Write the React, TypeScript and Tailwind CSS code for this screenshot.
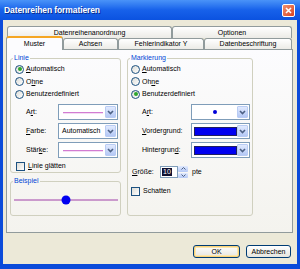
import React from "react";

const Chevron = () => (
  <svg width="7" height="5" viewBox="0 0 7 5">
    <path d="M1 1 L3.5 3.5 L6 1" fill="none" stroke="#4D6185" strokeWidth="1.6" />
  </svg>
);

const Radio = ({ checked, children, h = "h-[12px]" }: { checked?: boolean; children: React.ReactNode; h?: string }) => (
  <div className={`flex items-center ${h}`}>
    <span className="flex h-[9px] w-[9px] items-center justify-center rounded-full border border-[#1C5180] bg-gradient-to-br from-[#DCDCD6] to-white">
      {checked && <span className="h-[4px] w-[4px] rounded-full bg-[#2DA62D]" />}
    </span>
    <span className="ml-[2px]">{children}</span>
  </div>
);

const Check = ({ children }: { children: React.ReactNode }) => (
  <div className="flex h-[12px] items-center">
    <span className="h-[9px] w-[9px] border border-[#1C5180] bg-gradient-to-br from-[#DCDCD6] to-white" />
    <span className="ml-[3px]">{children}</span>
  </div>
);

const Combo = ({ children, w }: { children: React.ReactNode; w: string }) => (
  <div className={`flex h-[16px] ${w} border border-[#7F9DB9] bg-white p-px`}>
    <div className="flex flex-1 items-center justify-center overflow-hidden">{children}</div>
    <div className="flex w-[11px] items-center justify-center rounded-[1px] border border-[#B9CCF4] bg-gradient-to-b from-[#E1EAFE] to-[#B4C8F5]">
      <Chevron />
    </div>
  </div>
);

const LineSample = () => <div className="h-px w-[40px] bg-[#D27CD2] shadow-[0_0.5px_0_#E8B8E8]" />;

const Tab = ({ w, children, selected }: { w: string; children: React.ReactNode; selected?: boolean }) =>
  selected ? (
    <div
      className={`relative z-10 -mb-px flex h-[14px] ${w} items-center justify-center rounded-t-[3px] border-x border-[#919B9C] border-t-2 border-t-[#F5A623] bg-[#FCFCFE]`}
    >
      {children}
    </div>
  ) : (
    <div
      className={`flex h-full ${w} items-center justify-center rounded-t-[3px] border-x border-t border-[#919B9C] bg-gradient-to-b from-white to-[#ECEBE6]`}
    >
      {children}
    </div>
  );

const Btn = ({ w, children, def }: { w: string; children: React.ReactNode; def?: boolean }) => (
  <div
    className={`flex h-[13px] ${w} items-center justify-center rounded-[3px] border border-[#003C74] bg-gradient-to-b from-white to-[#E6E5DE] ${
      def ? "shadow-[inset_0_0_0_1px_#F9D37A,inset_0_0_0_2px_#FCE7B0]" : ""
    }`}
  >
    {children}
  </div>
);

const legend = "ml-[2px] px-px text-[7px] leading-[8px] text-[#0046D5]";

export default function App() {
  return (
    <div className="flex h-[269px] w-[300px] flex-col overflow-hidden bg-[#0B4BDA] font-['Liberation_Sans',Arial,sans-serif] text-[7px] leading-[8px] text-black">
      {/* Title bar */}
      <div className="flex h-[20px] items-center bg-gradient-to-b from-[#4A93F8] via-[#1761EA] to-[#0B52E0] pl-[4px] pr-[5px]">
        <span className="flex-1 text-[8.5px] font-bold tracking-[-0.1px] text-white [text-shadow:1px_1px_0_#0A2A8A]">
          Datenreihen formatieren
        </span>
        <div className="flex h-[13px] w-[13px] items-center justify-center rounded-[2px] border border-white bg-gradient-to-br from-[#F0906E] to-[#D8401E]">
          <svg width="7" height="7" viewBox="0 0 7 7">
            <path d="M1 1 L6 6 M6 1 L1 6" stroke="white" strokeWidth="1.6" />
          </svg>
        </div>
      </div>

      {/* Body */}
      <div className="mx-[3px] flex flex-1 flex-col bg-[#ECE9D8] pl-[3px] pt-[6px]">
        {/* Tabs row 1 */}
        <div className="ml-px flex h-[12px]">
          <Tab w="w-[165px]">Datenreihenanordnung</Tab>
          <Tab w="w-[120px]">Optionen</Tab>
        </div>
        {/* Tabs row 2 */}
        <div className="flex h-[11px] items-end">
          <Tab w="w-[57px]" selected>
            Muster
          </Tab>
          <Tab w="w-[55px]">Achsen</Tab>
          <Tab w="w-[86px]">Fehlerindikator Y</Tab>
          <Tab w="w-[88px]">Datenbeschriftung</Tab>
        </div>

        {/* Panel */}
        <div className="flex h-[184px] w-[287px] gap-[6px] border border-[#919B9C] bg-gradient-to-b from-[#FCFCFE] to-[#F4F3EE] pl-[3px] pt-[4px]">
          {/* Left column */}
          <div className="flex flex-col">
            <fieldset className="h-[119px] w-[111px] rounded-[3px] border border-[#D0D0BF]">
              <legend className={legend}>Linie</legend>
              <div className="pl-[4px] pt-px">
                <Radio checked>
                  <u>A</u>utomatisch
                </Radio>
                <Radio h="h-[13px]">
                  O<u>h</u>ne
                </Radio>
                <Radio>Benutzerdefiniert</Radio>
              </div>
              <div className="mt-[4px] flex flex-col gap-[3px] pl-[15px]">
                <div className="flex items-center">
                  <span className="w-[32px]">
                    A<u>r</u>t:
                  </span>
                  <Combo w="w-[60px]">
                    <LineSample />
                  </Combo>
                </div>
                <div className="flex items-center">
                  <span className="w-[32px]">
                    <u>F</u>arbe:
                  </span>
                  <Combo w="w-[60px]">
                    <span className="w-full pl-[2px]">Automatisch</span>
                  </Combo>
                </div>
                <div className="flex items-center">
                  <span className="w-[32px]">
                    Stär<u>k</u>e:
                  </span>
                  <Combo w="w-[60px]">
                    <LineSample />
                  </Combo>
                </div>
              </div>
              <div className="mt-[2px] pl-[5px]">
                <Check>
                  <u>L</u>inie glätten
                </Check>
              </div>
            </fieldset>
            <fieldset className="mt-[4px] h-[39px] w-[111px] rounded-[3px] border border-[#D0D0BF]">
              <legend className={legend}>Beispiel</legend>
              <div className="flex justify-center">
                <svg width="104" height="30" viewBox="0 0 104 30">
                  <line x1="0" y1="15" x2="104" y2="15" stroke="#A040A8" strokeWidth="1" />
                  <circle cx="52" cy="15" r="4.5" fill="#0000F0" />
                </svg>
              </div>
            </fieldset>
          </div>

          {/* Right column */}
          <fieldset className="h-[162px] w-[126px] rounded-[3px] border border-[#D0D0BF]">
            <legend className={legend}>Markierung</legend>
            <div className="pl-[3px] pt-px">
              <Radio>
                <u>A</u>utomatisch
              </Radio>
              <Radio h="h-[13px]">
                Oh<u>n</u>e
              </Radio>
              <Radio checked>Benutzerdefiniert</Radio>
            </div>
            <div className="mt-[4px] flex flex-col gap-[3px] pl-[14px]">
              <div className="flex items-center">
                <span className="w-[49px]">
                  A<u>r</u>t:
                </span>
                <Combo w="w-[59px]">
                  <span className="h-[4px] w-[4px] rounded-full bg-[#0000D8]" />
                </Combo>
              </div>
              <div className="flex items-center">
                <span className="w-[49px]">
                  <u>V</u>ordergrund:
                </span>
                <Combo w="w-[59px]">
                  <span className="h-[9px] w-[43px] border border-[#202060] bg-[#0000F0]" />
                </Combo>
              </div>
              <div className="flex items-center">
                <span className="w-[49px]">
                  Hintergrun<u>d</u>:
                </span>
                <Combo w="w-[59px]">
                  <span className="h-[9px] w-[43px] border border-[#202060] bg-[#0000F0]" />
                </Combo>
              </div>
            </div>
            <div className="mt-[8px] flex h-[12px] items-center pl-[4px]">
              <span className="w-[28px]">
                <u>G</u>röße:
              </span>
              <div className="flex h-[12px] w-[18px] items-center border border-[#7F9DB9] bg-white pl-px">
                <span className="bg-[#101030] px-px text-white">10</span>
              </div>
              <div className="flex h-[12px] w-[10px] flex-col gap-px">
                <div className="flex flex-1 items-center justify-center rounded-[1px] bg-gradient-to-b from-[#E1EAFE] to-[#B4C8F5]">
                  <svg width="5" height="3" viewBox="0 0 5 3">
                    <path d="M0.5 2.5 L2.5 0.5 L4.5 2.5" fill="none" stroke="#4D6185" strokeWidth="1" />
                  </svg>
                </div>
                <div className="flex flex-1 items-center justify-center rounded-[1px] bg-gradient-to-b from-[#E1EAFE] to-[#B4C8F5]">
                  <svg width="5" height="3" viewBox="0 0 5 3">
                    <path d="M0.5 0.5 L2.5 2.5 L4.5 0.5" fill="none" stroke="#4D6185" strokeWidth="1" />
                  </svg>
                </div>
              </div>
              <span className="ml-[4px]">pte</span>
            </div>
            <div className="mt-[7px] pl-[3px]">
              <Check>Schatten</Check>
            </div>
          </fieldset>
        </div>

        {/* Buttons */}
        <div className="mt-[12px] flex justify-end gap-[6px] pr-[6px]">
          <Btn w="w-[47px]" def>
            OK
          </Btn>
          <Btn w="w-[45px]">Abbrechen</Btn>
        </div>
      </div>
      <div className="h-[5px] shrink-0" />
    </div>
  );
}
